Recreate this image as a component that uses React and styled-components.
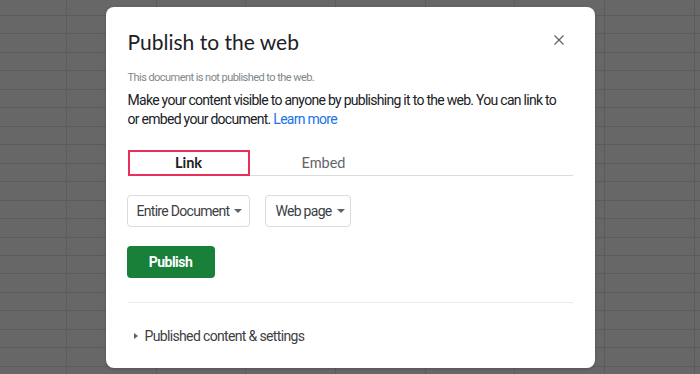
import React from 'react';
import styled, { createGlobalStyle } from 'styled-components';

const GlobalStyle = createGlobalStyle`
  html, body {
    margin: 0;
    padding: 0;
  }
  body {
    font-family: Roboto, "Liberation Sans", Arial, sans-serif;
    background-color: #676767;
    background-image:
      repeating-linear-gradient(90deg, transparent 0 66px, #5c5c5c 66px 67px, transparent 67px 89.7px),
      repeating-linear-gradient(180deg, transparent 0 15px, #5c5c5c 15px 16px, transparent 16px 18.46px);
  }
`;

const Overlay = styled.div`
  height: 374px;
  display: flex;
  align-items: center;
  justify-content: center;
`;

const Dialog = styled.div`
  width: 489px;
  height: 361px;
  box-sizing: border-box;
  background: #fff;
  border-radius: 8px;
  padding: 21px 22px 0 22px;
  display: flex;
  flex-direction: column;
  box-shadow: 0 1px 3px rgba(0, 0, 0, 0.2);
`;

const Header = styled.div`
  display: flex;
  align-items: flex-start;
  justify-content: space-between;
`;

const Title = styled.h1`
  margin: 0;
  font-family: Lato, "Open Sans", sans-serif;
  font-size: 21px;
  font-weight: 400;
  line-height: 28px;
  color: #202124;
`;

const CloseButton = styled.button`
  border: 0;
  background: none;
  padding: 0;
  margin: 6px 8px 0 0;
  width: 12px;
  height: 12px;
  display: flex;
  cursor: pointer;
`;

const Status = styled.p`
  margin: 15px 0 0 0;
  font-size: 11px;
  line-height: 14px;
  color: #80868b;
  letter-spacing: -0.55px;
`;

const Description = styled.p`
  margin: 6px 0 0 0;
  font-size: 14px;
  line-height: 19px;
  color: #202124;
  letter-spacing: -0.72px;
  white-space: nowrap;
`;

const LearnMore = styled.a`
  color: #1a73e8;
  text-decoration: none;
`;

const Tabs = styled.div`
  display: flex;
  margin-top: 21px;
  border-bottom: 1px solid #dadce0;
`;

const Tab = styled.div`
  width: ${p => p.width}px;
  height: 26px;
  box-sizing: border-box;
  display: flex;
  align-items: center;
  justify-content: center;
  font-family: Lato, Roboto, sans-serif;
  font-size: 14.5px;
  font-weight: ${p => (p.active ? 700 : 400)};
  color: ${p => (p.active ? '#202124' : '#5f6368')};
  border: 2px solid ${p => (p.highlight ? '#e8305a' : 'transparent')};
  margin-bottom: -1px;
`;

const Controls = styled.div`
  display: flex;
  gap: 15px;
  margin-top: 19px;
  margin-left: -1px;
`;

const Select = styled.div`
  height: 32px;
  box-sizing: border-box;
  border: 1px solid #dadce0;
  border-radius: 4px;
  display: flex;
  align-items: center;
  gap: 5px;
  padding: 0 ${p => p.padRight}px 0 9px;
  font-size: 14px;
  color: #3c4043;
  letter-spacing: -0.7px;
`;

const Caret = styled.span`
  width: 0;
  height: 0;
  border-left: 4px solid transparent;
  border-right: 4px solid transparent;
  border-top: 4px solid #5f6368;
`;

const PublishButton = styled.button`
  align-self: flex-start;
  margin-top: 19px;
  margin-left: -1px;
  width: 88px;
  height: 32px;
  border: 0;
  border-radius: 4px;
  background: #188038;
  color: #fff;
  font-family: Roboto, sans-serif;
  font-size: 14px;
  font-weight: 700;
  letter-spacing: -0.5px;
`;

const Divider = styled.hr`
  margin: 24px 0 0 0;
  border: 0;
  border-top: 1px solid #e8eaed;
`;

const Expander = styled.div`
  display: flex;
  align-items: center;
  gap: 7px;
  margin-top: 25px;
  padding-left: 6px;
  font-size: 14px;
  color: #3c4043;
  letter-spacing: -0.65px;
`;

const Arrow = styled.span`
  width: 0;
  height: 0;
  border-top: 3px solid transparent;
  border-bottom: 3px solid transparent;
  border-left: 4px solid #5f6368;
`;

export default function App() {
  return (
    <>
      <GlobalStyle />
      <Overlay>
        <Dialog>
          <Header>
            <Title>Publish to the web</Title>
            <CloseButton aria-label="Close">
              <svg width="12" height="12" viewBox="0 0 12 12">
                <path d="M1.5 1.5L10.5 10.5M10.5 1.5L1.5 10.5" stroke="#5f6368" strokeWidth="1.2" />
              </svg>
            </CloseButton>
          </Header>
          <Status>This document is not published to the web.</Status>
          <Description>
            Make your content visible to anyone by publishing it to the web. You can link to
            <br />
            or embed your document. <LearnMore href="#">Learn more</LearnMore>
          </Description>
          <Tabs>
            <Tab width={122} active highlight>Link</Tab>
            <Tab width={148}>Embed</Tab>
          </Tabs>
          <Controls>
            <Select padRight={7}>Entire Document <Caret /></Select>
            <Select padRight={5}>Web page <Caret /></Select>
          </Controls>
          <PublishButton>Publish</PublishButton>
          <Divider />
          <Expander>
            <Arrow />
            Published content &amp; settings
          </Expander>
        </Dialog>
      </Overlay>
    </>
  );
}
